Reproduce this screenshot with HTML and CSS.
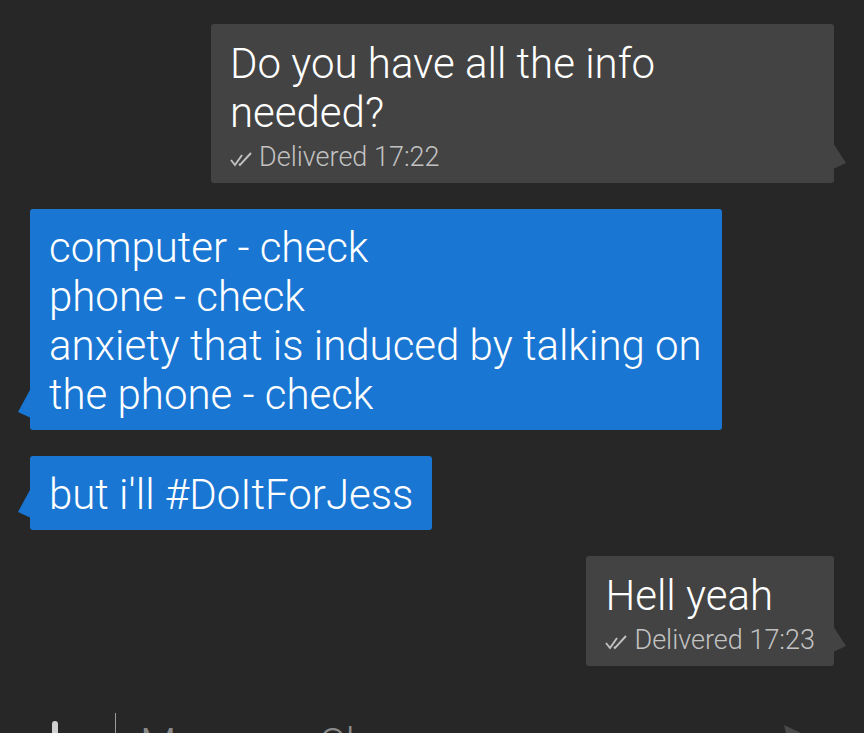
FILE: index.html
```html
<!DOCTYPE html>
<html lang="en">
<head>
  <meta charset="UTF-8">
  <title>Messages</title>
  <link rel="stylesheet" href="styles.css">
</head>
<body>
  <div class="thread">
    <div class="row sent">
      <div class="bubble out">
        <div class="text">Do you have all the info needed?</div>
        <div class="status">
          <svg class="ticks" viewBox="0 0 26 16" width="26" height="16">
            <polyline points="1,9 5,14 12,4" />
            <polyline points="9,13 10,14 21,2" />
          </svg>
          Delivered 17:22
        </div>
      </div>
    </div>

    <div class="row received">
      <div class="bubble in">
        <div class="text lines">computer - check
phone - check
anxiety that is induced by talking on the phone - check</div>
      </div>
    </div>

    <div class="row received">
      <div class="bubble in">
        <div class="text">but i'll #DoItForJess</div>
      </div>
    </div>

    <div class="row sent">
      <div class="bubble out">
        <div class="text">Hell yeah</div>
        <div class="status">
          <svg class="ticks" viewBox="0 0 26 16" width="26" height="16">
            <polyline points="1,9 5,14 12,4" />
            <polyline points="9,13 10,14 21,2" />
          </svg>
          Delivered 17:23
        </div>
      </div>
    </div>
  </div>

  <div class="composer">
    <span class="attach"></span>
    <span class="cursor"></span>
    <span class="placeholder">Message Chomp</span>
    <svg class="send" viewBox="0 0 40 40" width="40" height="40">
      <polygon points="4,4 38,20 4,36 8,20" />
    </svg>
  </div>
</body>
</html>
```

FILE: styles.css
```css
html, body {
  margin: 0;
  height: 733px;
  overflow: hidden;
}
body {
  font-family: 'Roboto', 'Noto Sans', sans-serif;
  background: #272727;
  color: #fff;
}
.thread {
  display: flex;
  flex-direction: column;
  gap: 26px;
  padding: 24px 30px 0 30px;
}
.row {
  display: flex;
}
.row.sent { justify-content: flex-end; }
.row.received { justify-content: flex-start; }

.bubble {
  position: relative;
  border-radius: 3px;
}
.bubble.out {
  background: #434343;
  max-width: 585px;
  padding: 15px 19px 7px 19px;
}
.bubble.in {
  background: #1976d2;
  max-width: 654px;
  padding: 14px 19px 11px 19px;
}
.bubble::after {
  content: "";
  position: absolute;
  width: 13px;
  background: inherit;
}
.bubble.out::after {
  right: -12px;
  bottom: 14px;
  height: 26px;
  clip-path: polygon(0 0, 100% 77%, 0 100%);
}
.bubble.in::after {
  left: -12px;
  bottom: 12px;
  height: 30px;
  clip-path: polygon(100% 0, 0 80%, 100% 100%);
}

.text {
  font-size: 42px;
  line-height: 49px;
  font-weight: 300;
}
.text.lines { white-space: pre-line; }

.status {
  display: flex;
  align-items: center;
  gap: 3px;
  font-size: 27px;
  line-height: 38px;
  font-weight: 300;
  color: #c2c2c2;
  margin-top: 1px;
}
.ticks {
  fill: none;
  stroke: #c2c2c2;
  stroke-width: 1.9;
  margin-top: 3px;
}

.composer {
  display: flex;
  align-items: flex-start;
  padding: 0 44px 0 52px;
  margin-top: 47px;
  height: 60px;
}
.attach {
  width: 6px;
  height: 30px;
  border-radius: 3px;
  background: #d0d0d0;
  margin-top: 8px;
}
.cursor {
  width: 1px;
  height: 40px;
  background: #9a9a9a;
  margin-left: 57px;
}
.placeholder {
  font-size: 42px;
  line-height: 49px;
  font-weight: 300;
  color: #8a8a8a;
  margin-left: 24px;
  margin-top: 6px;
  flex: 1;
}
.send {
  fill: #4a4a4a;
  margin-top: 8px;
}
```
